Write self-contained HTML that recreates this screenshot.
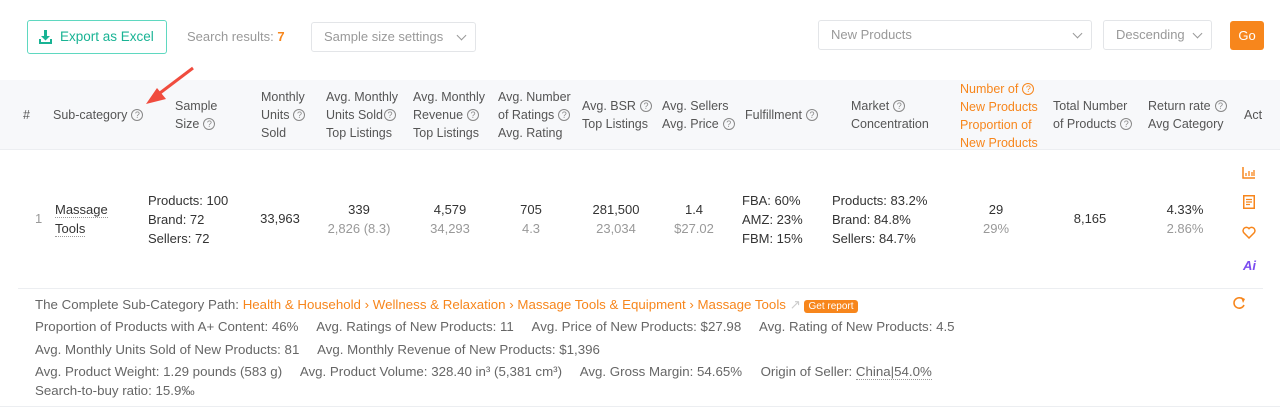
<!DOCTYPE html>
<html><head><meta charset="utf-8"><style>
*{margin:0;padding:0;box-sizing:border-box}
body{width:1280px;height:408px;background:#fff;font-family:"Liberation Sans",sans-serif;font-size:12.5px;color:#333;position:relative;overflow:hidden}
.a{position:absolute;white-space:nowrap;line-height:18px}
.c{transform:translateX(-50%);text-align:center}
.h{color:#555}
.g{color:#999}
.o{color:#f7861c}
.q{display:inline-block;width:12px;height:12px;border:1px solid #888;border-radius:50%;font-size:9px;line-height:10px;text-align:center;color:#888;vertical-align:1px;margin-left:4px}
.sel{position:absolute;border:1px solid #e3e5e8;border-radius:3px;color:#999;font-size:13px;line-height:28px;padding-left:12px;background:#fff}
.sel:after{content:"";position:absolute;right:10px;top:9px;width:6px;height:6px;border-right:1px solid #999;border-bottom:1px solid #999;transform:rotate(45deg)}
.d{color:#666;line-height:22px;font-size:13.3px}
.u{border-bottom:1px dotted #999}
.r{font-size:13px}
</style></head><body>
<div style="position:absolute;left:27px;top:20px;width:140px;height:34px;border:1px solid #5fd8c0;border-radius:3px;color:#19b394;font-size:13.5px;line-height:32px;padding-left:32px">Export as Excel
<svg style="position:absolute;left:11px;top:9px" width="13" height="14" viewBox="0 0 13 14"><path d="M5 0h3v6h3l-4.5 4.5L2 6h3z" fill="#19b394"/><path d="M0 9v5h13V9h-2v3H2V9z" fill="#19b394"/></svg></div>
<div class="a" style="left:187px;top:28px;color:#999;font-size:13px">Search results: <b class="o" style="font-weight:bold">7</b></div>
<div class="sel" style="left:311px;top:22px;width:165px;height:30px">Sample size settings</div>
<div class="sel" style="left:818px;top:20px;width:274px;height:30px">New Products</div>
<div class="sel" style="left:1103px;top:20px;width:109px;height:30px">Descending</div>
<div style="position:absolute;left:1230px;top:21px;width:34px;height:29px;background:#f7861c;border-radius:3px;color:#fff;font-size:13px;line-height:29px;text-align:center">Go</div>

<div style="position:absolute;left:0;top:80px;width:1280px;height:70px;background:#f7f8fa;border-bottom:1px solid #eceef1"></div>
<svg style="position:absolute;left:140px;top:66px" width="56" height="42"><path d="M53 2L12 33" stroke="#f04c3e" stroke-width="3"/><path d="M6 38l20-5-9-11z" fill="#f04c3e"/></svg>
<div class="a h" style="left:23px;top:106px">#</div>
<div class="a h" style="left:53px;top:106px">Sub-category<span class="q">?</span></div>
<div class="a h" style="left:175px;top:97px">Sample<br>Size<span class="q">?</span></div>
<div class="a h" style="left:261px;top:88px">Monthly<br>Units<span class="q">?</span><br>Sold</div>
<div class="a h" style="left:326px;top:88px">Avg. Monthly<br>Units Sold<span class="q" style="margin-left:1px">?</span><br>Top Listings</div>
<div class="a h" style="left:413px;top:88px">Avg. Monthly<br>Revenue<span class="q">?</span><br>Top Listings</div>
<div class="a h" style="left:498px;top:88px">Avg. Number<br>of Ratings<span class="q">?</span><br>Avg. Rating</div>
<div class="a h" style="left:582px;top:97px">Avg. BSR<span class="q">?</span><br>Top Listings</div>
<div class="a h" style="left:662px;top:97px">Avg. Sellers<br>Avg. Price<span class="q">?</span></div>
<div class="a h" style="left:745px;top:106px">Fulfillment<span class="q">?</span></div>
<div class="a h" style="left:851px;top:97px">Market<span class="q">?</span><br>Concentration</div>
<div class="a o" style="left:960px;top:80px">Number of<span class="q" style="border-color:#f7861c;color:#f7861c">?</span><br>New Products<br>Proportion of<br>New Products</div>
<div class="a h" style="left:1053px;top:97px">Total Number<br>of Products<span class="q">?</span></div>
<div class="a h" style="left:1148px;top:97px">Return rate<span class="q">?</span><br>Avg Category</div>
<div class="a h" style="left:1244px;top:106px">Act</div>

<div class="a g r" style="left:35px;top:210px">1</div>
<div class="a r" style="left:55px;top:200px;line-height:19px"><span class="u">Massage</span><br><span class="u">Tools</span></div>
<div class="a r" style="left:148px;top:191px;line-height:19px">Products: 100<br>Brand: 72<br>Sellers: 72</div>
<div class="a c r" style="left:280px;top:210px">33,963</div>
<div class="a c r" style="left:359px;top:200px;line-height:19px">339<br><span class="g">2,826 (8.3)</span></div>
<div class="a c r" style="left:450px;top:200px;line-height:19px">4,579<br><span class="g">34,293</span></div>
<div class="a c r" style="left:531px;top:200px;line-height:19px">705<br><span class="g">4.3</span></div>
<div class="a c r" style="left:616px;top:200px;line-height:19px">281,500<br><span class="g">23,034</span></div>
<div class="a c r" style="left:694px;top:200px;line-height:19px">1.4<br><span class="g">$27.02</span></div>
<div class="a r" style="left:742px;top:191px;line-height:19px">FBA: 60%<br>AMZ: 23%<br>FBM: 15%</div>
<div class="a r" style="left:832px;top:191px;line-height:19px">Products: 83.2%<br>Brand: 84.8%<br>Sellers: 84.7%</div>
<div class="a c r" style="left:996px;top:200px;line-height:19px">29<br><span class="g">29%</span></div>
<div class="a c r" style="left:1090px;top:210px">8,165</div>
<div class="a c r" style="left:1185px;top:200px;line-height:19px">4.33%<br><span class="g">2.86%</span></div>

<svg style="position:absolute;left:1242px;top:166px" width="14" height="13"><path d="M1 1v11h12" stroke="#f7861c" stroke-width="1.5" fill="none"/><path d="M4 10V7M7 10V5M10 10V6M12 10V4" stroke="#f7861c" stroke-width="1.3"/></svg>
<svg style="position:absolute;left:1243px;top:195px" width="12" height="14"><rect x="0.75" y="0.75" width="10.5" height="12.5" fill="none" stroke="#f7861c" stroke-width="1.5"/><path d="M3 4.5h6M3 7h6M3 9.5h4" stroke="#f7861c" stroke-width="1.2"/></svg>
<svg style="position:absolute;left:1242px;top:226px" width="14" height="13"><path d="M7 12L1.8 6.8A3.2 3.2 0 0 1 7 2.6 3.2 3.2 0 0 1 12.2 6.8z" fill="none" stroke="#f7861c" stroke-width="1.5"/></svg>
<div class="a" style="left:1243px;top:257px;font-weight:bold;font-style:italic;font-size:13px;color:#7b4cf0">Ai</div>

<div style="position:absolute;left:18px;top:288px;width:1245px;border-top:1px solid #eceef1"></div>
<div style="position:absolute;left:0;top:406px;width:1280px;border-top:1px solid #eceef1"></div>
<div class="a d" style="left:35px;top:294px">The Complete Sub-Category Path: <span class="o">Health &amp; Household › Wellness &amp; Relaxation › Massage Tools &amp; Equipment › Massage Tools</span> <span style="color:#ccc">&#x2197;</span> <span style="background:#f7861c;color:#fff;font-size:10px;padding:1px 4px;border-radius:3px">Get report</span></div>
<svg style="position:absolute;left:1232px;top:296px" width="14" height="14"><path d="M11.5 4A5.2 5.2 0 1 0 12 9" fill="none" stroke="#f7861c" stroke-width="1.6"/><path d="M9 1l4 2-2 4z" fill="#f7861c"/></svg>
<div class="a d" style="left:35px;top:316px">Proportion of Products with A+ Content: 46%&nbsp;&nbsp;&nbsp;&nbsp; Avg. Ratings of New Products: 11&nbsp;&nbsp;&nbsp;&nbsp; Avg. Price of New Products: $27.98&nbsp;&nbsp;&nbsp;&nbsp; Avg. Rating of New Products: 4.5</div>
<div class="a d" style="left:35px;top:339px">Avg. Monthly Units Sold of New Products: 81&nbsp;&nbsp;&nbsp;&nbsp; Avg. Monthly Revenue of New Products: $1,396</div>
<div class="a d" style="left:35px;top:361px">Avg. Product Weight: 1.29 pounds (583 g)&nbsp;&nbsp;&nbsp;&nbsp; Avg. Product Volume: 328.40 in³ (5,381 cm³)&nbsp;&nbsp;&nbsp;&nbsp; Avg. Gross Margin: 54.65%&nbsp;&nbsp;&nbsp;&nbsp; Origin of Seller: <span class="u">China|54.0%</span></div>
<div class="a d" style="left:35px;top:380px">Search-to-buy ratio: 15.9‰</div>
</body></html>
